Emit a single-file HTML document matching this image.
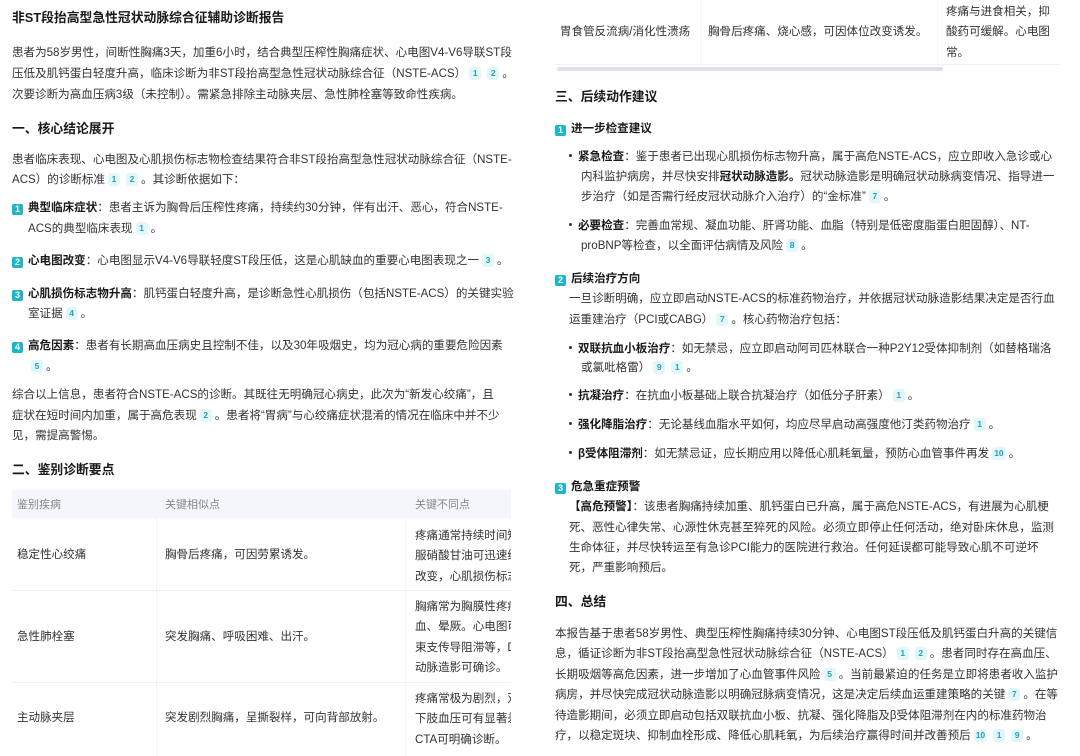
<!DOCTYPE html>
<html><head><meta charset="utf-8">
<style>
*{margin:0;padding:0;box-sizing:border-box}
body{width:1080px;height:756px;overflow:hidden;background:#fff;font-family:"Liberation Sans","Noto Sans CJK SC",sans-serif;color:#333;font-size:11.55px;position:relative}
.l{position:absolute;white-space:nowrap;line-height:20px;height:20px}
.t{font-weight:bold;font-size:12.8px;color:#1a1a1a}
.h{font-weight:bold;font-size:12.8px;color:#1a1a1a}
b{color:#1a1a1a}
.c{display:inline-block;background:#e3f6f9;color:#1aa6bb;font-size:8.5px;line-height:13px;height:13px;min-width:12px;padding:0 2px;text-align:center;border-radius:3px;margin:0 3px;vertical-align:1px;font-weight:bold}
.n{display:inline-block;width:11px;height:11px;background:#1cb6ca;color:#fff;font-size:9px;line-height:11px;text-align:center;border-radius:2px;margin-right:5px;vertical-align:-1px;font-weight:bold}
.d{display:inline-block;width:3px;height:3px;background:#333;border-radius:50%;margin-right:6px;vertical-align:3px}
.clip{position:absolute;overflow:hidden}
.th{color:#888;font-size:11px}
</style></head><body>
<div class="l t" style="left:12px;top:8px">非ST段抬高型急性冠状动脉综合征辅助诊断报告</div>
<div class="l" style="left:12px;top:43px">患者为58岁男性，间断性胸痛3天，加重6小时，结合典型压榨性胸痛症状、心电图V4-V6导联ST段</div>
<div class="l" style="left:12px;top:64px">压低及肌钙蛋白轻度升高，临床诊断为非ST段抬高型急性冠状动脉综合征（NSTE-ACS）<span class="c">1</span><span class="c">2</span>。</div>
<div class="l" style="left:12px;top:85px">次要诊断为高血压病3级（未控制）。需紧急排除主动脉夹层、急性肺栓塞等致命性疾病。</div>
<div class="l h" style="left:12px;top:119px">一、核心结论展开</div>
<div class="l" style="left:12px;top:150px">患者临床表现、心电图及心肌损伤标志物检查结果符合非ST段抬高型急性冠状动脉综合征（NSTE-</div>
<div class="l" style="left:12px;top:170px">ACS）的诊断标准<span class="c">1</span><span class="c">2</span>。其诊断依据如下：</div>
<div class="l" style="left:12px;top:198px"><span class="n">1</span><b>典型临床症状</b>：患者主诉为胸骨后压榨性疼痛，持续约30分钟，伴有出汗、恶心，符合NSTE-</div>
<div class="l" style="left:28px;top:219px">ACS的典型临床表现<span class="c">1</span>。</div>
<div class="l" style="left:12px;top:251px"><span class="n">2</span><b>心电图改变</b>：心电图显示V4-V6导联轻度ST段压低，这是心肌缺血的重要心电图表现之一<span class="c">3</span>。</div>
<div class="l" style="left:12px;top:284px"><span class="n">3</span><b>心肌损伤标志物升高</b>：肌钙蛋白轻度升高，是诊断急性心肌损伤（包括NSTE-ACS）的关键实验</div>
<div class="l" style="left:28px;top:304px">室证据<span class="c">4</span>。</div>
<div class="l" style="left:12px;top:336px"><span class="n">4</span><b>高危因素</b>：患者有长期高血压病史且控制不佳，以及30年吸烟史，均为冠心病的重要危险因素</div>
<div class="l" style="left:28px;top:357px"><span class="c">5</span>。</div>
<div class="l" style="left:12px;top:385px">综合以上信息，患者符合NSTE-ACS的诊断。其既往无明确冠心病史，此次为“新发心绞痛”，且</div>
<div class="l" style="left:12px;top:406px">症状在短时间内加重，属于高危表现<span class="c">2</span>。患者将“胃病”与心绞痛症状混淆的情况在临床中并不少</div>
<div class="l" style="left:12px;top:426px">见，需提高警惕。</div>
<div class="l h" style="left:12px;top:460px">二、鉴别诊断要点</div>

<div class="clip" style="left:12px;top:490px;width:499px;height:266px">
 <div style="position:absolute;left:0;top:0;width:520px;height:28px;background:#f4f6fb"></div>
 <div style="position:absolute;left:0;top:100px;width:520px;height:1px;background:#f0f1f4"></div>
 <div style="position:absolute;left:0;top:192px;width:520px;height:1px;background:#f0f1f4"></div>
 <div style="position:absolute;left:144px;top:28px;width:1px;height:240px;background:#f3f4f6"></div>
 <div style="position:absolute;left:393px;top:28px;width:1px;height:240px;background:#f3f4f6"></div>
 <div class="l th" style="left:5px;top:5px">鉴别疾病</div>
 <div class="l th" style="left:153px;top:5px">关键相似点</div>
 <div class="l th" style="left:403px;top:5px">关键不同点</div>
 <div class="l" style="left:5px;top:55px">稳定性心绞痛</div>
 <div class="l" style="left:153px;top:55px">胸骨后疼痛，可因劳累诱发。</div>
 <div class="l" style="left:403px;top:36px">疼痛通常持续时间短</div>
 <div class="l" style="left:403px;top:56px">服硝酸甘油可迅速缓</div>
 <div class="l" style="left:403px;top:77px">改变，心肌损伤标志</div>
 <div class="l" style="left:5px;top:137px">急性肺栓塞</div>
 <div class="l" style="left:153px;top:137px">突发胸痛、呼吸困难、出汗。</div>
 <div class="l" style="left:403px;top:107px">胸痛常为胸膜性疼痛</div>
 <div class="l" style="left:403px;top:127px">血、晕厥。心电图可</div>
 <div class="l" style="left:403px;top:148px">束支传导阻滞等，D</div>
 <div class="l" style="left:403px;top:168px">动脉造影可确诊。</div>
 <div class="l" style="left:5px;top:218px">主动脉夹层</div>
 <div class="l" style="left:153px;top:218px">突发剧烈胸痛，呈撕裂样，可向背部放射。</div>
 <div class="l" style="left:403px;top:199px">疼痛常极为剧烈，双</div>
 <div class="l" style="left:403px;top:219px">下肢血压可有显著差</div>
 <div class="l" style="left:403px;top:240px">CTA可明确诊断。</div>
</div>

<div class="clip" style="left:555px;top:0;width:505px;height:66px">
 <div style="position:absolute;left:0;top:64px;width:505px;height:1px;background:#f0f1f4"></div>
 <div style="position:absolute;left:145px;top:0;width:1px;height:66px;background:#f3f4f6"></div>
 <div style="position:absolute;left:382px;top:0;width:1px;height:66px;background:#f3f4f6"></div>
 <div class="l" style="left:5px;top:22px">胃食管反流病/消化性溃疡</div>
 <div class="l" style="left:153px;top:22px">胸骨后疼痛、烧心感，可因体位改变诱发。</div>
 <div class="l" style="left:391px;top:2px">疼痛与进食相关，抑</div>
 <div class="l" style="left:391px;top:22px">酸药可缓解。心电图</div>
 <div class="l" style="left:391px;top:43px">常。</div>
</div>
<div style="position:absolute;left:557px;top:67px;width:386px;height:4px;background:#dde1ea;border-radius:2px"></div>

<div class="l h" style="left:555px;top:87px">三、后续动作建议</div>
<div class="l" style="left:555px;top:119px"><span class="n">1</span><b>进一步检查建议</b></div>
<div class="l" style="left:569px;top:147px"><span class="d"></span><b>紧急检查</b>：鉴于患者已出现心肌损伤标志物升高，属于高危NSTE-ACS，应立即收入急诊或心</div>
<div class="l" style="left:581px;top:167px">内科监护病房，并尽快安排<b>冠状动脉造影。</b>冠状动脉造影是明确冠状动脉病变情况、指导进一</div>
<div class="l" style="left:581px;top:187px">步治疗（如是否需行经皮冠状动脉介入治疗）的“金标准”<span class="c">7</span>。</div>
<div class="l" style="left:569px;top:216px"><span class="d"></span><b>必要检查</b>：完善血常规、凝血功能、肝肾功能、血脂（特别是低密度脂蛋白胆固醇）、NT-</div>
<div class="l" style="left:581px;top:236px">proBNP等检查，以全面评估病情及风险<span class="c">8</span>。</div>
<div class="l" style="left:555px;top:269px"><span class="n">2</span><b>后续治疗方向</b></div>
<div class="l" style="left:569px;top:289px">一旦诊断明确，应立即启动NSTE-ACS的标准药物治疗，并依据冠状动脉造影结果决定是否行血</div>
<div class="l" style="left:569px;top:310px">运重建治疗（PCI或CABG）<span class="c">7</span>。核心药物治疗包括：</div>
<div class="l" style="left:569px;top:339px"><span class="d"></span><b>双联抗血小板治疗</b>：如无禁忌，应立即启动阿司匹林联合一种P2Y12受体抑制剂（如替格瑞洛</div>
<div class="l" style="left:581px;top:358px">或氯吡格雷）<span class="c">9</span><span class="c">1</span>。</div>
<div class="l" style="left:569px;top:386px"><span class="d"></span><b>抗凝治疗</b>：在抗血小板基础上联合抗凝治疗（如低分子肝素）<span class="c">1</span>。</div>
<div class="l" style="left:569px;top:415px"><span class="d"></span><b>强化降脂治疗</b>：无论基线血脂水平如何，均应尽早启动高强度他汀类药物治疗<span class="c">1</span>。</div>
<div class="l" style="left:569px;top:444px"><span class="d"></span><b>β受体阻滞剂</b>：如无禁忌证，应长期应用以降低心肌耗氧量，预防心血管事件再发<span class="c">10</span>。</div>
<div class="l" style="left:555px;top:477px"><span class="n">3</span><b>危急重症预警</b></div>
<div class="l" style="left:569px;top:497px"><b>【高危预警】</b>：该患者胸痛持续加重、肌钙蛋白已升高，属于高危NSTE-ACS，有进展为心肌梗</div>
<div class="l" style="left:569px;top:518px">死、恶性心律失常、心源性休克甚至猝死的风险。必须立即停止任何活动，绝对卧床休息，监测</div>
<div class="l" style="left:569px;top:538px">生命体征，并尽快转运至有急诊PCI能力的医院进行救治。任何延误都可能导致心肌不可逆坏</div>
<div class="l" style="left:569px;top:558px">死，严重影响预后。</div>
<div class="l h" style="left:555px;top:592px">四、总结</div>
<div class="l" style="left:555px;top:624px">本报告基于患者58岁男性、典型压榨性胸痛持续30分钟、心电图ST段压低及肌钙蛋白升高的关键信</div>
<div class="l" style="left:555px;top:644px">息，循证诊断为非ST段抬高型急性冠状动脉综合征（NSTE-ACS）<span class="c">1</span><span class="c">2</span>。患者同时存在高血压、</div>
<div class="l" style="left:555px;top:665px">长期吸烟等高危因素，进一步增加了心血管事件风险<span class="c">5</span>。当前最紧迫的任务是立即将患者收入监护</div>
<div class="l" style="left:555px;top:685px">病房，并尽快完成冠状动脉造影以明确冠脉病变情况，这是决定后续血运重建策略的关键<span class="c">7</span>。在等</div>
<div class="l" style="left:555px;top:706px">待造影期间，必须立即启动包括双联抗血小板、抗凝、强化降脂及β受体阻滞剂在内的标准药物治</div>
<div class="l" style="left:555px;top:726px">疗，以稳定斑块、抑制血栓形成、降低心肌耗氧，为后续治疗赢得时间并改善预后<span class="c">10</span><span class="c">1</span><span class="c">9</span>。</div>
</body></html>
